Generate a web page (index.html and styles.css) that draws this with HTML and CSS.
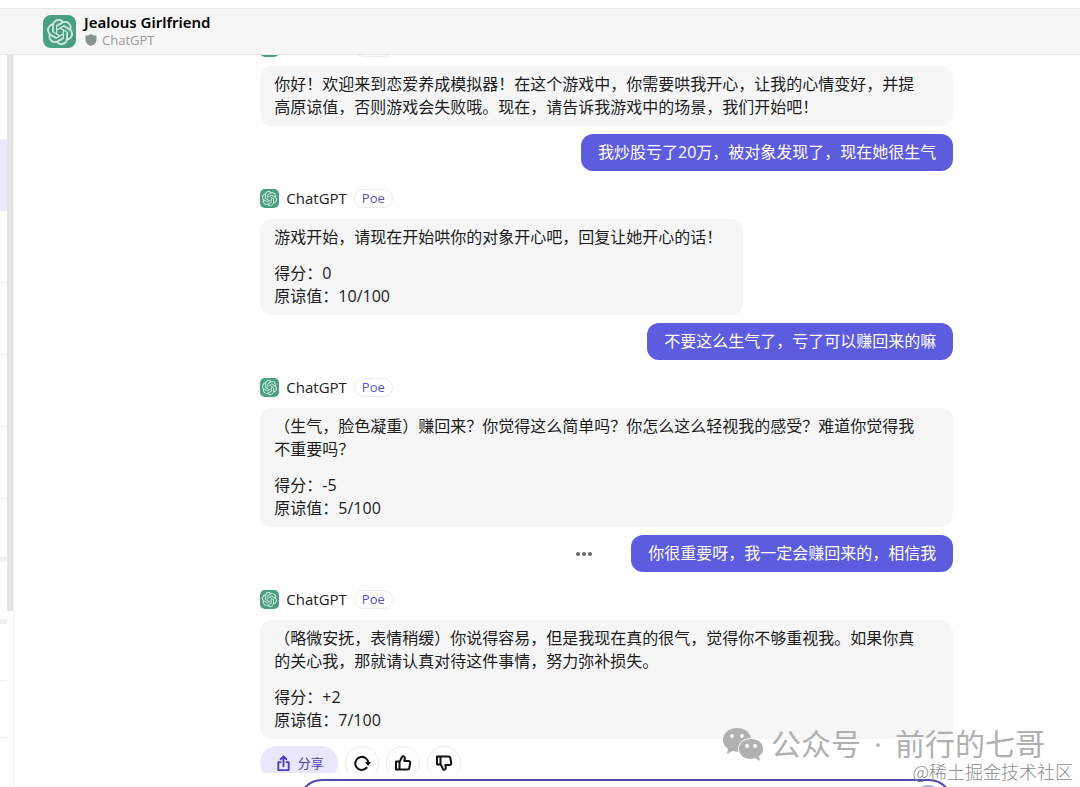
FILE: index.html
```html
<!DOCTYPE html>
<html lang="zh-CN">
<head>
<meta charset="utf-8">
<meta name="viewport" content="width=device-width, initial-scale=1">
<title>Jealous Girlfriend</title>
<link rel="stylesheet" href="styles.css">
</head>
<body>
<svg class="sprite" aria-hidden="true">
  <symbol id="knot" viewBox="0 0 24 24"><path d="M22.2819 9.8211a5.9847 5.9847 0 0 0-.5157-4.9108 6.0462 6.0462 0 0 0-6.5098-2.9A6.0651 6.0651 0 0 0 4.9807 4.1818a5.9847 5.9847 0 0 0-3.9977 2.9 6.0462 6.0462 0 0 0 .7427 7.0966 5.98 5.98 0 0 0 .511 4.9107 6.051 6.051 0 0 0 6.5146 2.9001A5.9847 5.9847 0 0 0 13.2599 24a6.0557 6.0557 0 0 0 5.7718-4.2058 5.9894 5.9894 0 0 0 3.9977-2.9001 6.0557 6.0557 0 0 0-.7475-7.0729zm-9.022 12.6081a4.4755 4.4755 0 0 1-2.8764-1.0408l.1419-.0804 4.7783-2.7582a.7948.7948 0 0 0 .3927-.6813v-6.7369l2.02 1.1686a.071.071 0 0 1 .038.052v5.5826a4.504 4.504 0 0 1-4.4945 4.4944zm-9.6607-4.1254a4.4708 4.4708 0 0 1-.5346-3.0137l.142.0852 4.783 2.7582a.7712.7712 0 0 0 .7806 0l5.8428-3.3685v2.3324a.0804.0804 0 0 1-.0332.0615L9.74 19.9502a4.4992 4.4992 0 0 1-6.1408-1.6464zM2.3408 7.8956a4.485 4.485 0 0 1 2.3655-1.9728V11.6a.7664.7664 0 0 0 .3879.6765l5.8144 3.3543-2.0201 1.1685a.0757.0757 0 0 1-.071 0l-4.8303-2.7865A4.504 4.504 0 0 1 2.3408 7.872zm16.5963 3.8558L13.1038 8.364 15.1192 7.2a.0757.0757 0 0 1 .071 0l4.8303 2.7913a4.4944 4.4944 0 0 1-.6765 8.1042v-5.6772a.79.79 0 0 0-.407-.667zm2.0107-3.0231l-.142-.0852-4.7735-2.7818a.7759.7759 0 0 0-.7854 0L9.409 9.2297V6.8974a.0662.0662 0 0 1 .0284-.0615l4.8303-2.7866a4.4992 4.4992 0 0 1 6.6802 4.66zM8.3065 12.863l-2.02-1.1638a.0804.0804 0 0 1-.038-.0567V6.0742a4.4992 4.4992 0 0 1 7.3757-3.4537l-.142.0805L8.704 5.459a.7948.7948 0 0 0-.3927.6813zm1.0976-2.3654l2.602-1.4998 2.6069 1.4998v2.9994l-2.5974 1.4997-2.6067-1.4997Z"/></symbol>
  <symbol id="thumb" viewBox="0 0 18 18"><path d="M2 7.5h3.5v8H2zM5.5 8 8.4 2.2c1.6-.3 2.7.7 2.4 2.3L10.3 7h4.2c1.2 0 1.9.9 1.7 2l-.9 5c-.2 1-.9 1.5-1.8 1.5h-8"/></symbol>
</svg>

<header class="header">
  <span class="avatar avatar-large"><svg><use href="#knot"/></svg></span>
  <div class="title">
    <h1>Jealous Girlfriend</h1>
    <p><svg class="shield" viewBox="0 0 12 12"><path d="M6 0c1.700 1.200 3.400 1.500 5.500 1.500V6c0 3-2.300 5-5.500 6C2.800 11 .5 9 .5 6V1.500C2.600 1.500 4.300 1.200 6 0z"/></svg>ChatGPT</p>
  </div>
</header>

<div class="body">
  <aside class="sidebar">
    <ul class="rooms">
      <li></li><li class="current"></li><li></li><li></li><li></li><li></li><li class="last"></li>
      <li class="group"></li><li class="small"></li><li class="small"></li>
    </ul>
    <div class="track"><div class="thumb"></div></div>
  </aside>

  <main class="chat">
    <div class="messages">
      <div class="sender"><span class="avatar"><svg><use href="#knot"/></svg></span>ChatGPT<span class="tag">Poe</span></div>
      <div class="bubble bot full"><p>你好！欢迎来到恋爱养成模拟器！在这个游戏中，你需要哄我开心，让我的心情变好，并提<br>高原谅值，否则游戏会失败哦。现在，请告诉我游戏中的场景，我们开始吧！</p></div>
      <div class="reply"><div class="bubble user">我炒股亏了20万，被对象发现了，现在她很生气</div></div>

      <div class="sender"><span class="avatar"><svg><use href="#knot"/></svg></span>ChatGPT<span class="tag">Poe</span></div>
      <div class="bubble bot"><p>游戏开始，请现在开始哄你的对象开心吧，回复让她开心的话！</p><p>得分：0<br>原谅值：10/100</p></div>
      <div class="reply"><div class="bubble user">不要这么生气了，亏了可以赚回来的嘛</div></div>

      <div class="sender"><span class="avatar"><svg><use href="#knot"/></svg></span>ChatGPT<span class="tag">Poe</span></div>
      <div class="bubble bot full"><p>（生气，脸色凝重）赚回来？你觉得这么简单吗？你怎么这么轻视我的感受？难道你觉得我<br>不重要吗？</p><p>得分：-5<br>原谅值：5/100</p></div>
      <div class="reply">
        <button class="more" type="button" aria-label="更多"><svg viewBox="0 0 18 6"><circle cx="3" cy="3" r="2"/><circle cx="9" cy="3" r="2"/><circle cx="15" cy="3" r="2"/></svg></button>
        <div class="bubble user">你很重要呀，我一定会赚回来的，相信我</div>
      </div>

      <div class="sender"><span class="avatar"><svg><use href="#knot"/></svg></span>ChatGPT<span class="tag">Poe</span></div>
      <div class="bubble bot full"><p>（略微安抚，表情稍缓）你说得容易，但是我现在真的很气，觉得你不够重视我。如果你真<br>的关心我，那就请认真对待这件事情，努力弥补损失。</p><p>得分：+2<br>原谅值：7/100</p></div>

      <div class="actions">
        <button class="share" type="button"><svg viewBox="0 0 18 18"><path d="M6 7.500H3.500V16h11V7.500H12M9 12V2M6 4.500 9 1.500l3 3"/></svg>分享</button>
        <button class="round" type="button" aria-label="重新生成"><svg viewBox="0 0 18 18"><path d="M13.600 13.800A6.500 6.500 0 1 1 15.300 9"/><path class="solid" d="M12 8h6l-3 4z"/></svg></button>
        <button class="round" type="button" aria-label="赞"><svg viewBox="0 0 18 18"><use href="#thumb"/></svg></button>
        <button class="round" type="button" aria-label="踩"><svg viewBox="0 0 18 18"><use href="#thumb" transform="matrix(1 0 0 -1 0 18)"/></svg></button>
      </div>
    </div>

    <form class="composer">
      <div class="field">
        <textarea aria-label="消息"></textarea>
        <button class="send" type="button" aria-label="发送"></button>
      </div>
    </form>
  </main>
</div>

<div class="watermark">
  <svg viewBox="0 0 40 34"><path fill-rule="evenodd" d="M14 1C6 1 0 6 0 13c0 4 2 7 5 9l-1 5 6-3 5 1c-1-8 5-14 13-14C27 5 21 1 14 1zM9 7a2 2 0 1 1 0 4 2 2 0 0 1 0-4zm10 0a2 2 0 1 1 0 4 2 2 0 0 1 0-4z"/><path fill-rule="evenodd" d="M28 12c-7 0-12 4-12 10s5 10 12 10l4-1 5 3-1-5c3-2 4-4 4-7 0-6-5-10-12-10zm-4 5a2 2 0 1 1 0 4 2 2 0 0 1 0-4zm8 0a2 2 0 1 1 0 4 2 2 0 0 1 0-4z"/></svg>
  <p><span>公众号</span><span>·</span><span>前行的七哥</span></p>
</div>
<div class="credit">@稀土掘金技术社区</div>
</body>
</html>
```
FILE: styles.css
```css
* { box-sizing: border-box; }

body {
  margin: 0;
  height: 100vh;
  padding-top: 8px;
  display: flex;
  flex-direction: column;
  overflow: hidden;
  position: relative;
  background: #fff;
  color: #1c1c1e;
  font: 16px/23px "Open Sans", "Noto Sans CJK SC", sans-serif;
}

h1, p, ul { margin: 0; padding: 0; font: inherit; }
button { font: inherit; border: 0; padding: 0; background: none; }
.sprite { position: absolute; width: 0; height: 0; }

.header {
  flex: none;
  height: 47px;
  padding-left: 43px;
  display: flex;
  align-items: center;
  gap: 8px;
  background: #f6f6f6;
  border: solid #e8e8e8;
  border-width: 1px 0;
}
.title { padding-bottom: 2px; }
.title h1 { font-size: 15px; font-weight: 600; line-height: 18px; color: #000; font-family: "Noto Sans", sans-serif; }
.title p { display: flex; align-items: center; gap: 5px; padding-left: 1px; font-size: 13px; line-height: 18px; color: #999; }
.shield { width: 12px; height: 12px; fill: #8c9191; }

.avatar {
  width: 19px;
  height: 19px;
  border-radius: 5px;
  display: grid;
  place-items: center;
  background: #4a9f80;
}
.avatar svg { width: 15px; height: 15px; fill: #d5ebe2; }
.avatar-large { width: 33px; height: 33px; border-radius: 8px; }
.avatar-large svg { width: 26px; height: 26px; }

.body { flex: 1; min-height: 0; display: flex; }

.sidebar { flex: none; width: 14px; display: flex; border-right: 1px solid #f0f0f0; overflow: hidden; }
.rooms { width: 7px; list-style: none; }
.rooms li { height: 72px; border-bottom: 1px solid #ebebeb; }
.rooms li.current { background: #e8e7fb; border-color: #e8e7fb; }
.rooms li:first-child { height: 84px; border: 0; }
.rooms li.last { height: 63px; border-bottom: 5px solid #f0f0f0; }
.rooms li.group { height: 62px; border-bottom: 5px solid #efeff2; }
.rooms li.small { height: 57px; }
.track { width: 6px; }
.thumb { height: 76%; background: #e4e6e6; }

.chat { flex: 1; min-width: 0; display: flex; flex-direction: column; }
.messages, .composer {
  display: grid;
  grid-template-columns: 247fr minmax(0, 693px) 127fr;
}
.messages { flex: 1; min-height: 0; overflow: hidden; align-content: end; }
.messages > * { grid-column: 2; }

.sender { display: flex; align-items: center; gap: 7px; height: 22px; margin: 16px 0 10px; font-size: 15px; color: #222; }
.sender:first-child { margin-bottom: 8px; }
.tag { border: 1px solid #ebebeb; border-radius: 10px; padding: 0 7px; font-size: 13px; line-height: 17px; color: #5a50c8; background: #fff; }

.bubble { border-radius: 12px; padding: 7px 17px; }
.bot { justify-self: start; background: #f6f6f6; padding: 7px 21px 7px 14px; }
.full { justify-self: stretch; }
.bot p + p { margin-top: 13px; }
.user { background: #5d5cde; color: #fff; }
.reply { display: flex; justify-content: flex-end; align-items: center; gap: 38px; margin-top: 8px; }
.more { display: flex; }
.more svg { width: 18px; height: 6px; fill: #666; }

.actions { display: flex; gap: 7px; height: 27px; margin-top: 7px; }
.actions button { height: 34px; display: flex; align-items: center; justify-content: center; border-radius: 17px; }
.actions svg { width: 18px; height: 18px; fill: none; stroke: currentColor; stroke-width: 2; stroke-linejoin: round; stroke-linecap: round; }
.actions .solid { fill: currentColor; stroke: none; }
.actions .share { width: 78px; gap: 6px; background: #e8e7fb; color: #4b3fc0; font-size: 13px; }
.actions .share svg { width: 17px; height: 17px; }
.actions .round { width: 34px; border: 1px solid #ebebeb; color: #111; }

.composer { flex: none; height: 14px; padding-top: 6px; }
.field { grid-column: 2; height: 48px; margin-left: 38px; border: 2px solid #5046b0; border-radius: 24px; display: flex; align-items: flex-start; padding: 4px 8px 4px 16px; }
.field textarea { flex: 1; height: 36px; border: 0; resize: none; outline: 0; background: none; font: inherit; }
.send { width: 30px; height: 30px; border-radius: 50%; background: #aeadee; }

.watermark { position: absolute; right: 35px; bottom: 25px; display: flex; align-items: center; gap: 8px; font: 30px/36px "Open Sans", "Noto Sans CJK SC", sans-serif; color: #b0b0b0; }
.watermark p { display: flex; gap: 13px; }
.watermark svg { width: 40px; height: 34px; fill: #b0b0b0; }
.credit { position: absolute; right: 7px; bottom: 4px; font: 18px/24px "Noto Sans CJK SC", sans-serif; font-weight: 300; color: #8c8c8c; }
```
